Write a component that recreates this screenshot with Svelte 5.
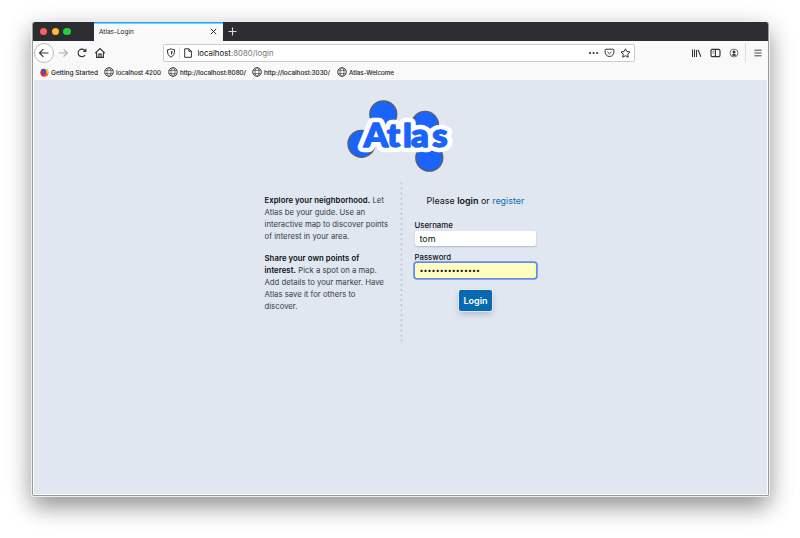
<script>
  const bookmarks = [
    { label: 'Getting Started', slot: 64.3, text: 47, fox: true },
    { label: 'localhost 4200', slot: 64, text: 45 },
    { label: 'http://localhost:8080/', slot: 84.5, text: 66 },
    { label: 'http://localhost:3030/', slot: 84.5, text: 66 },
    { label: 'Atlas-Welcome', slot: 64, text: 45 }
  ];
  const letterX = '0 21 35.6 43 62.3';
  let username = $state('tom');
  let password = $state('atlas-guide-map');
</script>

<div class="desktop">
  <div class="window">
    <div class="tabs">
      <div class="lights"><i class="red"></i><i class="yellow"></i><i class="green"></i></div>
      <div class="tab">
        <span>Atlas-Login</span>
        <svg width="7" height="7" viewBox="0 0 7 7"><path d="M.8.8l5.4 5.4M6.2.8L.8 6.2" stroke="#333" stroke-width="1" /></svg>
      </div>
      <svg class="plus" width="9" height="9" viewBox="0 0 9 9"><path d="M4.5.5v8M.5 4.5h8" stroke="#ddd" stroke-width="1.1" /></svg>
    </div>

    <div class="toolbar">
      <div class="back">
        <svg width="12" height="12" viewBox="0 0 12 12"><path d="M10.5 6h-9M5.3 2.1L1.5 6l3.8 3.9" /></svg>
      </div>
      <div class="ic fwd"><svg width="12" height="12" viewBox="0 0 12 12"><path d="M1.8 6h8.4M6.6 2.4L10.3 6 6.6 9.6" /></svg></div>
      <div class="ic reload"><svg width="12" height="12" viewBox="0 0 12 12"><path d="M9 8.100A3.800 3.800 0 1 1 9 3.700" /><path d="M6.700 4.900h3.700V1.200z" fill="#333" stroke="none" /></svg></div>
      <div class="ic"><svg width="12" height="12" viewBox="0 0 12 12"><path d="M1.200 6.200L6 1.600l4.800 4.600M2.600 5.400v4.900h6.800V5.400M4.900 10V7.100h2.200V10" /></svg></div>

      <div class="urlbar">
        <svg class="shield" width="10" height="10" viewBox="0 0 10 10"><path d="M5 .8c1.2.7 2.3.9 3.6 1C8.600 5.400 7.900 7.700 5 9.200 2.100 7.700 1.400 5.400 1.400 1.800 2.700 1.700 3.800 1.500 5 .8z" /><path d="M5 2.900v4c1.300-.9 1.700-2 1.700-3.600z" fill="#444" stroke="none" /></svg>
        <b class="sep"></b>
        <svg class="doc" width="10" height="10" viewBox="0 0 10 10"><path d="M1.700.8h4.200l2.500 2.500v6H1.700zM5.900.8v2.500h2.500" /></svg>
        <span class="url"><em>localhost</em>:8080/login</span>
        <svg class="dots" width="12" height="10" viewBox="0 0 12 10"><g fill="#333" stroke="none"><circle cx="2" cy="5" r="1.100" /><circle cx="5.600" cy="5" r="1.100" /><circle cx="9.200" cy="5" r="1.100" /></g></svg>
        <svg class="pocket" width="11" height="10" viewBox="0 0 11 10"><path d="M2 1.200h7q.9 0 .9.900v2a4.400 4.400 0 0 1-8.800 0v-2Q1.100 1.200 2 1.200zM3.500 3.900l2 1.900 2-1.900" /></svg>
        <svg class="star" width="11" height="10" viewBox="0 0 11 10"><path d="M5.500.8l1.400 2.800 3.100.4-2.300 2.100.6 3.100-2.800-1.500-2.800 1.500.6-3.100L1 4l3.100-.4z" /></svg>
      </div>

      <div class="ic lib"><svg width="11" height="10" viewBox="0 0 11 10"><path d="M1.500 1.500v7.500M3.500 1.500v7.500M5.500 2v7M7 1.700l2.900 7.100" stroke-width="1.050" /></svg></div>
      <div class="ic"><svg width="11" height="10" viewBox="0 0 11 10"><rect x="1" y="1.400" width="9" height="7.200" rx="1.300" /><path d="M5.400 1.500v7" /><path d="M2.400 3.400h1.700M2.400 5h1.700" stroke-width=".6" /></svg></div>
      <div class="ic acct"><svg width="10" height="10" viewBox="0 0 10 10"><circle cx="5" cy="5" r="4" stroke-width=".8" stroke="#555" /><circle cx="5" cy="3.900" r="1.500" fill="#333" stroke="none" /><path d="M2.500 7Q5 4.800 7.500 7 5 9.200 2.500 7z" fill="#333" stroke="none" /></svg></div>
      <b class="bar"></b>
      <svg width="8" height="8" viewBox="0 0 8 8"><path d="M.4 1.200h7.200M.4 4h7.200M.4 6.800h7.200" stroke-width=".9" /></svg>
    </div>

    <div class="bookmarks">
      {#each bookmarks as b}
        <div class="bm" style:width="{b.slot}px">
          {#if b.fox}
            <svg width="9" height="9" viewBox="0 0 9 9"><circle cx="4.500" cy="4.800" r="4" fill="#f2632f" /><path d="M5 .5Q9 2 8.500 5.800L5.500 5z" fill="#ffc42e" /><path d="M1 1.500Q4-.4 5.800 2.200L6.500 5 4.300 6.400 2.200 5z" fill="#3557b7" /><path d="M.7 2.500Q1.800 3.700 3.800 3.300L2.800 5.500Q4.500 7.400 6.800 6.400 4.500 9.200 1.500 7.500 0 5.700.7 2.500z" fill="#e4234d" /></svg>
          {:else}
            <svg width="10" height="10" viewBox="0 0 10 10" fill="none" stroke="#444"><circle cx="5" cy="5" r="4.300" stroke-width="1" /><ellipse cx="5" cy="5" rx="2" ry="4.300" stroke-width=".7" /><path d="M1 3.400h8M1 6.600h8" stroke-width=".7" /></svg>
          {/if}
          <svg class="lbl" width={b.text} height="10"><text x="0" y="7.600" textLength={b.text} lengthAdjust="spacingAndGlyphs">{b.label}</text></svg>
        </div>
      {/each}
    </div>

    <main>
      <svg class="logo" width="112" height="80" viewBox="344 96 112 80" aria-label="Atlas">
        <g fill="#1a64fb" stroke="#625f58" stroke-width="1.300">
          <circle cx="383.300" cy="114.300" r="13.500" />
          <circle cx="361.500" cy="143.800" r="13.500" />
          <circle cx="425" cy="124.900" r="13.500" />
          <circle cx="429.300" cy="157.700" r="13.500" />
        </g>
        <g transform="translate(363.800 147.200) scale(1.100 1)">
          <text class="halo" x={letterX} y="0" aria-hidden="true">Atlas</text>
          <text class="word" x={letterX} y="0">Atlas</text>
        </g>
      </svg>

      <div class="columns">
        <section class="about">
          <p><strong>Explore your neighborhood.</strong> Let<br />Atlas be your guide. Use an<br />interactive map to discover points<br />of interest in your area.</p>
          <p><strong>Share your own points of<br />interest.</strong> Pick a spot on a map.<br />Add details to your marker. Have<br />Atlas save it for others to<br />discover.</p>
        </section>
        <svg class="divider" width="3" height="164"><path d="M1.500 2.500v160" stroke="#bdc9d6" stroke-width="2.200" stroke-linecap="round" stroke-dasharray="0 5.070" /></svg>
        <form onsubmit={(e) => e.preventDefault()}>
          <div class="prompt">Please <strong>login</strong> or <a href="#register">register</a></div>
          <label for="user">Username</label>
          <input id="user" type="text" bind:value={username} />
          <label for="pass" class="second">Password</label>
          <input id="pass" class="focused" type="password" bind:value={password} />
          <button>Login</button>
        </form>
      </div>
    </main>
  </div>
</div>

<style>
  :global(body) { margin: 0; background: #fff; }
  .desktop { box-sizing: border-box; width: 800px; height: 538px; padding: 22px 0 0 32px; overflow: hidden; background: #fff; font-family: Inter, "Liberation Sans", sans-serif; }
  .window { box-sizing: border-box; width: 737px; height: 474px; border: 1px solid #999; border-top: 0; border-radius: 3px 3px 2px 2px; background: #fff; box-shadow: 0 0 0 1px #eee, 0 11px 22px rgba(0, 0, 0, .36), 0 5px 30px rgba(0, 0, 0, .12); }
  svg { display: block; flex: none; fill: none; }
  .tabs { height: 19px; display: flex; background: #2c2d30; border-radius: 2px 2px 0 0; align-items: center; }
  .lights { width: 60.500px; box-sizing: border-box; padding-left: 7px; display: flex; gap: 4.200px; }
  .lights i { width: 7.400px; height: 7.400px; border-radius: 50%; }
  .red { background: #fc5f58; }
  .yellow { background: #fdbc2f; }
  .green { background: #28cb42; }
  .tab { box-sizing: border-box; width: 129.500px; height: 19px; background: #f9f9fa; border-top: 1px solid #0aa5f5; display: flex; align-items: center; justify-content: space-between; padding: 0 6px 0 5.500px; font-size: 6.450px; color: #222; box-shadow: inset 0 .6px #0aa5f5; }
  .tab svg { margin-top: -1px; }
  .plus { margin-left: 5px; }
  .toolbar { height: 23px; background: #f9f9fa; display: flex; align-items: center; padding-left: 1px; stroke: #333; stroke-width: 1.150; }
  .back { box-sizing: border-box; width: 20px; height: 20px; border: 1px solid #bbb; border-radius: 50%; display: flex; align-items: center; justify-content: center; background: #fff; }
  .ic { width: 18.300px; display: flex; justify-content: center; }
  .fwd { stroke: #aaa; }
  .reload svg { margin-left: 1px; }
  .urlbar { box-sizing: border-box; width: 472px; height: 18px; margin-left: 54px; border: 1px solid #ccc; border-radius: 2px; background: #fff; display: flex; align-items: center; stroke-width: 1; }
  .shield { margin-left: 2.500px; }
  .sep { width: 1px; height: 12px; background: #ddd; margin: 0 3px; }
  .url { margin-left: 4px; flex: 1; font-size: 7.850px; color: #777; white-space: nowrap; }
  .url em { font-style: normal; color: #111; }
  .dots { margin-right: 4px; }
  .pocket { margin-right: 5px; }
  .star { margin-right: 3px; }
  .lib { margin-left: 52.900px; }
  .bar { width: 1px; height: 19px; background: #ddd; margin: 0 8px 0 2px; }
  .bookmarks { height: 16px; background: #f9f9fa; display: flex; align-items: center; padding-left: 6.700px; }
  .bm { display: flex; align-items: center; flex: none; }
  .lbl { margin-left: 2px; overflow: visible; }
  .lbl text { font-size: 6.200px; fill: #222; stroke: #222; stroke-width: .12px; }
  main { height: 414px; margin: 0 1px; background: #e0e7f1; box-sizing: border-box; padding-top: 16px; }
  .logo { margin-left: 310px; }
  .logo text { font-family: Lato, sans-serif; font-weight: 900; font-size: 31.500px; fill: #1a64fb; stroke-linejoin: round; }
  .logo .halo { stroke: #fff; stroke-width: 10.500px; }
  .logo .word { stroke: #1a64fb; stroke-width: 1.500px; }
  .columns { display: flex; padding-left: 230.500px; padding-top: 5px; }
  .about { width: 135.500px; padding-top: 13px; font-size: 7.750px; line-height: 12.150px; color: #353b44; white-space: nowrap; }
  p { margin: 0 0 9px; }
  .about strong { font-weight: 600; color: #090d12; letter-spacing: .06px; }
  form { margin-left: 11.500px; width: 122px; padding-top: 12px; display: flex; flex-direction: column; align-items: flex-start; }
  .prompt { align-self: center; height: 15px; line-height: 15px; font-size: 8.950px; color: #111; white-space: nowrap; margin-bottom: 13px; }
  .prompt strong { font-weight: 600; }
  a { color: #126cb3; text-decoration: none; }
  label { font-size: 7.800px; font-weight: 500; line-height: 9px; height: 9px; color: #111; }
  .second { margin-top: 7px; }
  input { box-sizing: border-box; width: 121.500px; height: 15px; border: 0; border-radius: 2px; padding: 0 5px; margin-top: 1px; font: 9px Inter, sans-serif; color: #111; background: #fff; outline: 0; box-shadow: 0 1px 1.500px rgba(70, 80, 100, .3); }
  .focused { background: #fffdc0; box-shadow: 0 0 0 1.800px #648deb; font-size: 7px; letter-spacing: .1px; }
  button { align-self: center; box-sizing: border-box; width: 33px; height: 21px; margin-top: 12px; padding: 0; border: 0; border-radius: 2px; background: #0869b3; color: #fff; font: 600 9px Inter, sans-serif; box-shadow: 0 0 0 .7px #eee, 0 3px 6px rgba(40, 40, 70, .25); }
</style>
